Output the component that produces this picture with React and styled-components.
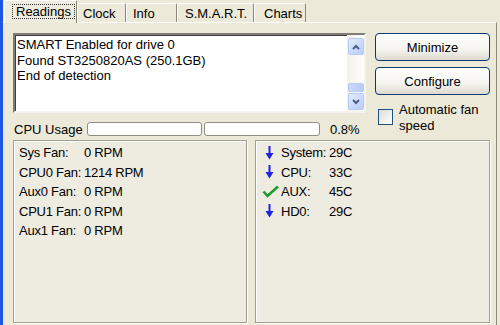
import React from 'react';
import styled, { createGlobalStyle } from 'styled-components';

const Global = createGlobalStyle`
  html, body { margin: 0; padding: 0; background: #ECE9D8; overflow: hidden; }
  body { font-family: "Liberation Sans", Arial, sans-serif; font-size: 13px; color: #000; }
`;

const Window = styled.div`
  width: 500px;
  height: 325px;
  box-sizing: border-box;
  background: #ECE9D8;
  border-left: 3px solid #1F56E6;
  padding-right: 3px;
  display: flex;
  flex-direction: column;
`;

const TabStrip = styled.div`
  display: flex;
  align-items: flex-end;
  height: 22px;
  padding-left: 1px;
  position: relative;
  z-index: 1;
`;

const Tab = styled.div`
  box-sizing: border-box;
  width: ${p => p.$w}px;
  height: ${p => (p.$active ? 23 : 19)}px;
  margin-bottom: ${p => (p.$active ? -1 : 0)}px;
  padding-left: ${p => p.$pl}px;
  display: flex;
  align-items: center;
  padding-bottom: ${p => (p.$active ? 2 : 0)}px;
  padding-top: ${p => (p.$active ? 0 : 1)}px;
  background: ${p => (p.$active ? '#EEEBDF' : '#ECE9D8')};
  border-top: 1px solid #fff;
  border-left: 1px solid #fff;
  border-right: 1px solid #8A877B;
  border-radius: 2px 2px 0 0;
  white-space: nowrap;
`;

const FocusRect = styled.span`
  border: 1px dotted #333;
  padding: 0 3px;
  line-height: 13px;
`;

const Page = styled.div`
  flex: 1;
  box-sizing: border-box;
  border-top: 1px solid #fff;
  border-right: 1px solid #8C8A7E;
  padding: 10px 6px 2px 10px;
  display: flex;
  flex-direction: column;
`;

const TopArea = styled.div`
  display: grid;
  grid-template-columns: 357px 115px;
  column-gap: 5px;
`;

const LeftCol = styled.div`
  display: flex;
  flex-direction: column;
`;

const LogBox = styled.div`
  box-sizing: border-box;
  width: 353px;
  height: 80px;
  display: flex;
  background: #fff;
  border-style: solid;
  border-width: 2px;
  border-color: #7E7C74 #F4F3EE #F4F3EE #7E7C74;
  box-shadow: inset 1px 1px 0 #404040;
`;

const LogText = styled.div`
  flex: 1;
  padding: 2px 2px;
  line-height: 15.5px;
  white-space: nowrap;
`;

const ScrollBar = styled.div`
  width: 17px;
  display: flex;
  flex-direction: column;
  align-items: center;
  background: linear-gradient(90deg, #F3F1EA, #FEFEFB);
`;

const ScrollBtn = styled.div`
  box-sizing: border-box;
  width: 16px;
  height: 17px;
  margin-top: ${p => p.$mt || 0}px;
  margin-bottom: ${p => p.$mb || 0}px;
  border: 1px solid #B7CAF5;
  border-radius: 2px;
  background: linear-gradient(135deg, #E3EBFE, #B8CCF8);
  display: flex;
  align-items: center;
  justify-content: center;
`;

const Spacer = styled.div`
  flex: 1;
`;

const Thumb = styled.div`
  box-sizing: border-box;
  width: 16px;
  height: 9px;
  margin-bottom: 1px;
  border: 1px solid #B7CAF5;
  border-radius: 2px;
  background: linear-gradient(90deg, #CAD8FC, #B9CBF6);
`;

const CpuRow = styled.div`
  display: flex;
  align-items: center;
  height: 14px;
  margin-top: 9px;
`;

const CpuLabel = styled.span`
  margin-left: 1px;
  width: 73px;
  white-space: nowrap;
`;

const UsageBar = styled.div`
  box-sizing: border-box;
  width: ${p => p.$w}px;
  height: 14px;
  margin-left: ${p => p.$ml || 0}px;
  border: 1px solid #8E8D86;
  border-radius: 3px;
  background: #fff;
`;

const Percent = styled.span`
  margin-left: 10px;
`;

const RightCol = styled.div`
  display: flex;
  flex-direction: column;
  gap: 6px;
`;

const Button = styled.button`
  box-sizing: border-box;
  height: 28px;
  width: 100%;
  border: 1px solid #003C74;
  border-radius: 4px;
  background: linear-gradient(180deg, #FFFFFF 0%, #F5F4EF 60%, #DDD9CE 100%);
  font-family: "Liberation Sans", Arial, sans-serif;
  font-size: 13px;
  color: #000;
  padding: 0;
`;

const CheckRow = styled.div`
  display: flex;
  align-items: flex-start;
  margin-top: 1px;
`;

const CheckBox = styled.div`
  box-sizing: border-box;
  width: 15px;
  height: 16px;
  margin: 7px 0 0 3px;
  border: 1px solid #1C5180;
  background: linear-gradient(135deg, #DCDCD7, #FFFFFF);
`;

const CheckLabel = styled.div`
  margin-left: 6px;
  line-height: 16px;
`;

const Panels = styled.div`
  flex: 1;
  display: grid;
  grid-template-columns: 234px 235px;
  column-gap: 8px;
  margin-top: 4px;
`;

const Panel = styled.div`
  box-sizing: border-box;
  background: #EEEBE0;
  border: 1px solid #A19E91;
  box-shadow: 1px 1px 0 #FFFFFF, inset 1px 1px 0 #FFFFFF;
  padding: 2px 0 0 ${p => p.$pl}px;
  display: grid;
  grid-template-columns: ${p => p.$cols};
  grid-auto-rows: 19.5px;
  align-content: start;
  align-items: center;
  line-height: 19.5px;
  letter-spacing: -0.25px;
  white-space: nowrap;
`;

const IconCell = styled.span`
  display: flex;
  align-items: center;
  padding-left: ${p => p.$pl}px;
  height: 19.5px;
`;

const Chevron = ({ up }) => (
  <svg width="8" height="6" viewBox="0 0 8 6">
    <polyline
      points={up ? '1,5 4,2 7,5' : '1,1 4,4 7,1'}
      fill="none"
      stroke="#4D6185"
      strokeWidth="2"
    />
  </svg>
);

const DownArrow = () => (
  <svg width="9" height="14" viewBox="0 0 9 14">
    <rect x="3.5" y="0" width="2" height="9" fill="#2222E4" />
    <polygon points="0.5,7 8.5,7 4.5,13.5" fill="#2222E4" />
  </svg>
);

const CheckMark = () => (
  <svg width="17" height="13" viewBox="0 0 17 13">
    <polyline points="1.5,6.5 5.5,11 16,1.5" fill="none" stroke="#1E9A2C" strokeWidth="2.6" />
  </svg>
);

const tabs = [
  { label: 'Readings', w: 73, pl: 7, active: true },
  { label: 'Clock', w: 49, pl: 5 },
  { label: 'Info', w: 51, pl: 6 },
  { label: 'S.M.A.R.T.', w: 77, pl: 7 },
  { label: 'Charts', w: 52, pl: 9 },
];

const fans = [
  ['Sys Fan:', '0 RPM'],
  ['CPU0 Fan:', '1214 RPM'],
  ['Aux0 Fan:', '0 RPM'],
  ['CPU1 Fan:', '0 RPM'],
  ['Aux1 Fan:', '0 RPM'],
];

const temps = [
  ['down', 'System:', '29C'],
  ['down', 'CPU:', '33C'],
  ['ok', 'AUX:', '45C'],
  ['down', 'HD0:', '29C'],
];

export default function App() {
  return (
    <>
      <Global />
      <Window>
        <TabStrip>
          {tabs.map(t => (
            <Tab key={t.label} $w={t.w} $pl={t.pl} $active={t.active}>
              {t.active ? <FocusRect>{t.label}</FocusRect> : t.label}
            </Tab>
          ))}
        </TabStrip>
        <Page>
          <TopArea>
            <LeftCol>
              <LogBox>
                <LogText>
                  <div>SMART Enabled for drive 0</div>
                  <div>Found ST3250820AS (250.1GB)</div>
                  <div>End of detection</div>
                </LogText>
                <ScrollBar>
                  <ScrollBtn $mt={3}><Chevron up /></ScrollBtn>
                  <Spacer />
                  <Thumb />
                  <ScrollBtn $mb={1}><Chevron /></ScrollBtn>
                </ScrollBar>
              </LogBox>
              <CpuRow>
                <CpuLabel>CPU Usage</CpuLabel>
                <UsageBar $w={115} />
                <UsageBar $w={116} $ml={2} />
                <Percent>0.8%</Percent>
              </CpuRow>
            </LeftCol>
            <RightCol>
              <Button>Minimize</Button>
              <Button>Configure</Button>
              <CheckRow>
                <CheckBox />
                <CheckLabel>
                  Automatic fan
                  <br />
                  speed
                </CheckLabel>
              </CheckRow>
            </RightCol>
          </TopArea>
          <Panels>
            <Panel $pl={5} $cols="65px auto">
              {fans.map(([n, v]) => (
                <React.Fragment key={n}>
                  <span>{n}</span>
                  <span>{v}</span>
                </React.Fragment>
              ))}
            </Panel>
            <Panel $pl={6} $cols="19px 48px auto">
              {temps.map(([k, n, v]) => (
                <React.Fragment key={n}>
                  <IconCell $pl={k === 'ok' ? 0 : 3}>
                    {k === 'ok' ? <CheckMark /> : <DownArrow />}
                  </IconCell>
                  <span>{n}</span>
                  <span>{v}</span>
                </React.Fragment>
              ))}
            </Panel>
          </Panels>
        </Page>
      </Window>
    </>
  );
}
